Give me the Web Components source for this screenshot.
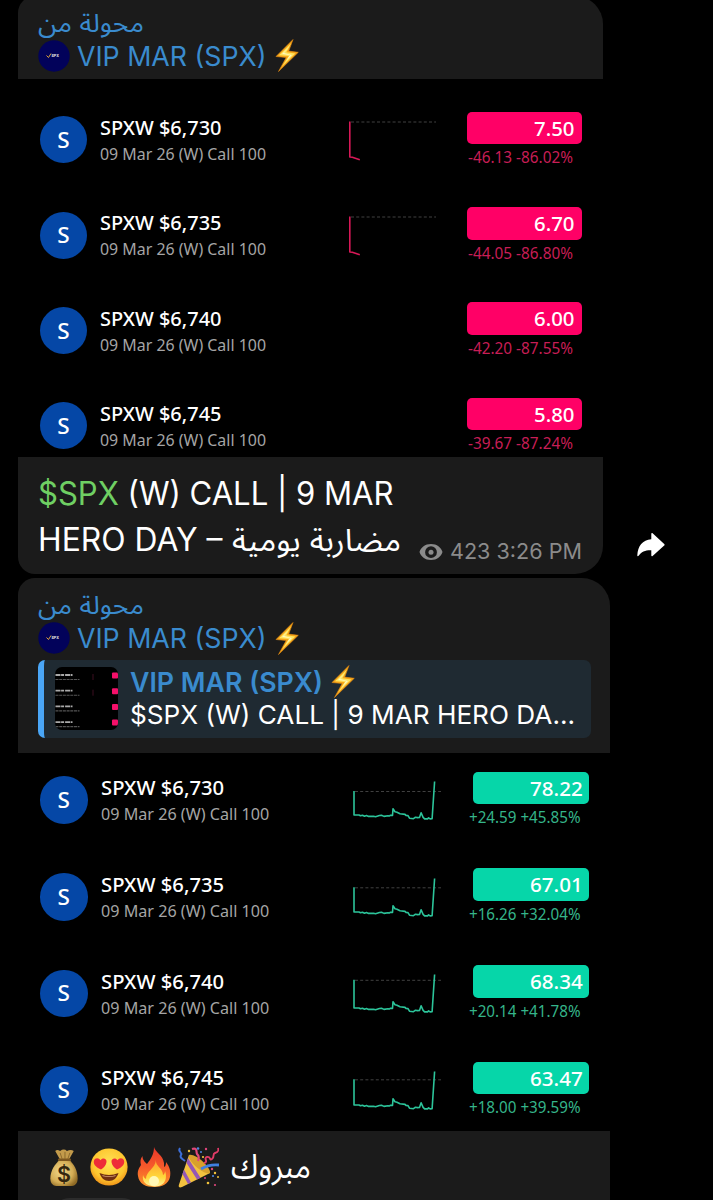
<!DOCTYPE html>
<html lang="ar">
<head>
<meta charset="utf-8">
<title>VIP MAR (SPX)</title>
<style>
  html, body {
    background: #000;
    height: 1200px;
    margin: 0;
    overflow: hidden;
  }
  body {
    color: #fff;
    font-family: Inter, "Noto Sans Arabic", "DejaVu Sans", sans-serif;
  }
  main {
    align-items: flex-start;
    display: flex;
    flex-direction: column;
    gap: 4px;
    padding-left: 18px;
  }
  .post {
    align-items: flex-end;
    display: flex;
    gap: 34.5px;
    margin-top: -4.5px;
  }
  .caption {
    display: block;
    height: 117px;
    box-sizing: border-box;
    padding: 14px 21px 0 20px;
    font-size: 32px;
    line-height: 46px;
  }
  .line {
    display: flex;
    height: 46px;
    white-space: nowrap;
  }
  .tag {
    color: #6fcf63;
  }
  .emojis {
    align-items: center;
    display: flex;
    height: 72px;
    padding-left: 29.5px;
    font-size: 33px;
  }
</style>
</head>
<body>
<main>
  <div class="post">
    <chat-bubble style="--w: 584.5px; --k: 1; --pad: 13.3px">
      <forward-header slot="head" style="height: 83.5px"></forward-header>
      <quote-row name="SPXW $6,730" price="7.50" change="-46.13 -86.02%" trend="down" ref="-18"></quote-row>
      <quote-row name="SPXW $6,735" price="6.70" change="-44.05 -86.80%" trend="down" ref="-18"></quote-row>
      <quote-row name="SPXW $6,740" price="6.00" change="-42.20 -87.55%"></quote-row>
      <quote-row name="SPXW $6,745" price="5.80" change="-39.67 -87.24%"></quote-row>
      <div slot="foot" class="caption">
        <div class="line"><fit-text width="355.5"><span class="tag">$SPX</span> (W) CALL | 9 MAR</fit-text></div>
        <div class="line">
          <fit-text width="184.5">HERO DAY –</fit-text>
          <fit-text width="169" style="margin-left: 9px; font-size: 31px">مضاربة يومية</fit-text>
          <post-meta></post-meta>
        </div>
      </div>
    </chat-bubble>
    <share-arrow></share-arrow>
  </div>

  <chat-bubble style="--w: 592px; --k: 1.0135; --pad: 0px; --lift: -1.2px">
    <forward-header slot="head" style="height: 82px"></forward-header>
    <reply-box slot="head"></reply-box>
    <quote-row name="SPXW $6,730" price="78.22" change="+24.59 +45.85%" trend="up" ref="-8.5"></quote-row>
    <quote-row name="SPXW $6,735" price="67.01" change="+16.26 +32.04%" trend="up" ref="-9.2"></quote-row>
    <quote-row name="SPXW $6,740" price="68.34" change="+20.14 +41.78%" trend="up" ref="-12.7"></quote-row>
    <quote-row name="SPXW $6,745" price="63.47" change="+18.00 +39.59%" trend="up" ref="-10.2"></quote-row>
    <div slot="foot" class="emojis">
      <emoji-icon name="bag" style="width: 32px; height: 39px"></emoji-icon>
      <emoji-icon name="love" style="width: 38px; height: 38px; margin-left: 10px"></emoji-icon>
      <emoji-icon name="fire" style="width: 34px; height: 40px; margin-left: 9px"></emoji-icon>
      <emoji-icon name="party" style="width: 42px; height: 41px; margin-left: 6px"></emoji-icon>
      <fit-text width="80" style="margin-left: 12px">مبروك</fit-text>
    </div>
    <reaction-pill slot="foot"></reaction-pill>
  </chat-bubble>
</main>

<script>
// Text squeezed or stretched to a given advance width
class FitText extends HTMLElement {
  constructor () {
    super()
    this.attachShadow({ mode: 'open' })
    this.shadowRoot.innerHTML = `
      <style>
        :host { display: inline-block; white-space: nowrap; flex: none; }
        span { display: inline-block; transform-origin: 0 50%; }
      </style>
      <span><slot></slot></span>`
  }

  connectedCallback () {
    const span = this.shadowRoot.querySelector('span')
    const width = parseFloat(this.getAttribute('width'))
    const natural = span.getBoundingClientRect().width
    this.style.width = width + 'px'
    span.style.transform = `scaleX(${width / natural})`
  }
}
customElements.define('fit-text', FitText)

const emojis = {
  bolt: `<svg viewBox="0 0 24 33">
    <path d="M18 .5 1 17.500l10.200 1L3.500 32.500 23.300 13.300l-9.600-1.200z" fill="#f7a81b" stroke="#e58a10" stroke-width=".6" stroke-linejoin="round"/>
    <path d="M16 4.500 4 16.200l9.800.9L7 27.500 20.300 14.400l-9-1.200z" fill="#ffe45c"/>
    <path d="M14 8 7 15l8 1-4 6 6-6-8-2z" fill="#fff8c4"/></svg>`,
  bag: `<svg viewBox="0 0 32 40">
    <defs><radialGradient id="b" cx=".4" cy=".45" r=".65"><stop offset="0" stop-color="#f3d98c"/><stop offset=".65" stop-color="#d4ad55"/><stop offset="1" stop-color="#8f6a25"/></radialGradient></defs>
    <path d="M7 3q2-2 5 0 4-3 7 0 4-2 7 0l-5 9H12z" fill="#c39b4b"/>
    <path d="M12 5l2 6m3-7v7m5-6-2 6" stroke="#8b692c" fill="none"/>
    <path d="M12 12h9c5 4 9 11 9 19 0 6-3 8-8 8H10c-5 0-8-2-8-8 0-8 5-15 10-19z" fill="url(#b)"/>
    <path d="M11 12h11" stroke="#7c571f" stroke-width="2.500" stroke-linecap="round"/>
    <text x="16" y="34.500" text-anchor="middle" font-family="Inter, sans-serif" font-weight="600" font-size="22" fill="#33260f">$</text></svg>`,
  love: `<svg viewBox="0 0 38 38">
    <defs><radialGradient id="l" cx=".5" cy=".4" r=".62"><stop offset="0" stop-color="#ffe457"/><stop offset=".7" stop-color="#fdc62f"/><stop offset="1" stop-color="#ee8e16"/></radialGradient></defs>
    <circle cx="19" cy="19" r="18.600" fill="url(#l)"/>
    <path d="M11 21.500C5 19 3 15.500 4 12.500c1-3 5-3 6.500-.2C12.500 9 17 10.500 16.500 14c-.4 3-2.500 5.500-5.500 7.500z" fill="#ee2d38"/>
    <path d="M27 21.500c6-2.500 8-6 7-9-1-3-5-3-6.500-.2C25.500 9 21 10.500 21.500 14c.4 3 2.500 5.500 5.500 7.500z" fill="#ee2d38"/>
    <path d="M9.500 25q9.500 4 19 0c-1.500 5-5 8-9.500 8s-8-3-9.500-8z" fill="#713012"/>
    <path d="M12 27q7 2.500 14 0l-1 1.200q-6 1.600-12 0z" fill="#d9a27a"/></svg>`,
  fire: `<svg viewBox="0 0 34 40">
    <defs><linearGradient id="f" x2="0" y2="1"><stop offset="0" stop-color="#e9362a"/><stop offset=".5" stop-color="#f65a2b"/><stop offset="1" stop-color="#fb9629"/></linearGradient>
    <linearGradient id="g" x2="0" y2="1"><stop offset="0" stop-color="#fda02c"/><stop offset=".65" stop-color="#ffd83b"/><stop offset="1" stop-color="#fff3a0"/></linearGradient></defs>
    <path d="M17 0c1 5 9 8 10 16 .2 2-.2 3 .5 4 1-1 1.500-2.500 1.500-5 4 5 5 10 4 15-1.500 7-8 10-16 10S2 37 1 29c-.8-5 1-8 3-11-.8-3-1-6 1.500-9C5.500 13 8 15 10 17 14 12 17 7 17 0z" fill="url(#f)"/>
    <path d="M19 13c-1 6 7 8 7 15 1-.5 2-2 2-4 2 5 2 15-10 15.500C8 39 5 34 6 28c.5 2 1.500 3 3 4 0-8 9-10 10-19z" fill="url(#g)"/>
    <ellipse cx="17" cy="34" rx="5" ry="5" fill="#fff8b5"/></svg>`,
  party: `<svg viewBox="0 0 42 41">
    <path d="M12 8 2 37.500c-1 2.500.5 3.500 3 2.500l28-14z" fill="#f3c13f"/>
    <path d="M9.500 16 20 32.500l3.500-1.700L11 11zM5.500 27 11 37l3-1.500L7 22.500z" fill="#9557b5"/>
    <path d="M12 8c6-2 22 12 21 18-5 3-23-12-21-18z" fill="#d8a02c"/>
    <path d="M3 1c-3 4 3 4 1 7s2 4 4 6" fill="none" stroke="#3d6fd8" stroke-width="2"/>
    <path d="M15 2c6-2 4 4 5 5s3 2 1 7" fill="none" stroke="#e14879" stroke-width="2.200"/>
    <path d="M27 16c5-1-1-5 3-6s2 4 5 2 0-5 3-6 4-2 3-5" fill="none" stroke="#e03b67" stroke-width="1.900"/>
    <path d="M24 22q8-5 18-4" fill="none" stroke="#3f7fe0" stroke-width="2.800"/>
    <g fill="#f2c33d"><circle cx="12" cy="4" r="1.200"/><circle cx="26" cy="10" r="1.100"/><circle cx="38" cy="26" r="1.200"/><circle cx="31" cy="36" r="1.300"/><circle cx="41" cy="30" r="1"/></g>
    <g fill="#4d86e0"><circle cx="21" cy="1.500" r="1.300"/><circle cx="24" cy="5" r="1"/><circle cx="36" cy="29" r="1.100"/></g>
    <g fill="#df467c"><circle cx="29" cy="2" r="1.200"/><circle cx="38" cy="38" r="1.100"/><circle cx="35" cy="22" r="1.200"/><circle cx="28" cy="31" r="1"/></g></svg>`
}

class EmojiIcon extends HTMLElement {
  constructor () {
    super()
    this.attachShadow({ mode: 'open' })
    this.shadowRoot.innerHTML = `
      <style>
        :host { display: block; flex: none; }
        svg { display: block; height: 100%; width: 100%; }
      </style>
      ${emojis[this.getAttribute('name')]}`
  }
}
customElements.define('emoji-icon', EmojiIcon)

class ChatBubble extends HTMLElement {
  constructor () {
    super()
    this.attachShadow({ mode: 'open' })
    this.shadowRoot.innerHTML = `
      <style>
        :host {
          background: #1b1b1b;
          border-radius: 17px 28px 28px 17px;
          display: block;
          flex: none;
          overflow: hidden;
          width: var(--w);
        }
        .media {
          background: #000;
          box-sizing: border-box;
          height: 378px;
          overflow: hidden;
          padding-top: var(--pad);
        }
        .rows { margin-top: var(--lift, 0px); }
      </style>
      <slot name="head"></slot>
      <div class="media"><div class="rows"><slot></slot></div></div>
      <slot name="foot"></slot>`
  }
}
customElements.define('chat-bubble', ChatBubble)

class ForwardHeader extends HTMLElement {
  constructor () {
    super()
    this.attachShadow({ mode: 'open' })
    this.shadowRoot.innerHTML = `
      <style>
        :host {
          box-sizing: border-box;
          color: #3a8bce;
          display: block;
          padding: 11px 20px 0 19.500px;
        }
        .from { font-size: 25px; height: 33px; line-height: 32px; }
        .who { align-items: center; display: flex; height: 32px; font-size: 26.500px; }
        svg { display: block; height: 32px; margin-right: 7.500px; width: 32px; }
        emoji-icon { height: 33px; margin-left: 8.500px; width: 24px; }
      </style>
      <div class="from"><fit-text width="106">محولة من</fit-text></div>
      <div class="who">
        <svg viewBox="0 0 32 32">
          <circle cx="16" cy="16" r="15.700" fill="#02025a"/>
          <path d="M8.500 15.500l2 2 2.500-4" stroke="#e0a53c" fill="none" stroke-width="1"/>
          <text x="13.500" y="17.200" font-size="3.600" font-weight="800" font-family="Inter, sans-serif" fill="#ddd">SPX</text>
        </svg>
        <fit-text width="189.5">VIP MAR (SPX)</fit-text>
        <emoji-icon name="bolt"></emoji-icon>
      </div>`
  }
}
customElements.define('forward-header', ForwardHeader)

class ReplyBox extends HTMLElement {
  constructor () {
    super()
    this.attachShadow({ mode: 'open' })
    const rows = [0, 1, 2, 3].map(i => `
      <g transform="translate(0 ${i * 15.7})">
        <path d="M.5 8h17" stroke="#aaa" stroke-width="1.800" stroke-dasharray="5 .6 3 1"/>
        <path d="M.5 12.500h24" stroke="#555" stroke-width="1.100" stroke-dasharray="3 .7"/>
        <rect x="57" y="5.500" width="6" height="6" rx="1" fill="#f5106a"/>
        ${i < 2 ? '<path d="M38 7v6" stroke="#57142e" stroke-width=".7"/>' : ''}
      </g>`).join('')
    this.shadowRoot.innerHTML = `
      <style>
        :host {
          align-items: center;
          background: #1f2a32;
          border-left: 6px solid #4aa6f6;
          border-radius: 7px;
          box-sizing: border-box;
          display: flex;
          height: 77.500px;
          margin: 0 19px 15.500px 19.500px;
        }
        svg { background: #000; border-radius: 7px; display: block; height: 63px; margin: 0 12px 0 11px; width: 63px; }
        .lines { padding-bottom: 1.500px; }
        .name { align-items: center; color: #3a8bce; display: flex; font-size: 26.500px; font-weight: 600; height: 33px; }
        .name emoji-icon { height: 33px; margin-left: 8.500px; width: 24px; }
        .text { font-size: 26px; height: 33px; line-height: 33px; }
      </style>
      <svg viewBox="0 0 63 63">${rows}</svg>
      <div class="lines">
        <div class="name"><fit-text width="193">VIP MAR (SPX)</fit-text><emoji-icon name="bolt"></emoji-icon></div>
        <div class="text"><fit-text width="445">$SPX (W) CALL | 9 MAR HERO DA...</fit-text></div>
      </div>`
  }
}
customElements.define('reply-box', ReplyBox)

class SparkLine extends HTMLElement {
  constructor () {
    super()
    this.attachShadow({ mode: 'open' })
  }

  // y = 24 is the middle of the row, ref is the previous close relative to it
  connectedCallback () {
    const trend = this.getAttribute('trend')
    const y = 24 + parseFloat(this.getAttribute('ref'))
    let lines = ''
    if (trend === 'down') {
      lines = `<path d="M6 ${y}h85" class="ref"/>
        <path d="M4.800 ${y - 0.5}v35.500l2.500.2 7.500 2.500" stroke="#d81857"/>`
    }
    if (trend === 'up') {
      lines = `<path d="M7 ${y}h86" class="ref"/>
        <path d="M6 ${y - 0.5}V39h5l1.500.8 2-.5 2 1 2-.7 2 .8 5-.2 2 .5 4-1.200 2-.3 2.500 1.200 4-.6 1.500.2 1-.8 2 .2.500-6.600 2 3 2 .4 3 1.600 5 .6 1 1 2 .2 1.500 2.600 4 .5 2-1.500 2 .4 2-.2 1.600-4.600 2 4.600 1.500 1.500h3l1-1 1.500 1 2-.2L86.600 5.500" stroke="#2cc49a"/>`
    }
    this.shadowRoot.innerHTML = `
      <style>
        :host { display: block; height: 48px; width: 95px; }
        svg { display: block; overflow: visible; }
        path { fill: none; stroke-linejoin: round; stroke-width: 1.600; }
        .ref { stroke: #404040; stroke-dasharray: 3 2.200; stroke-width: 1; }
      </style>
      <svg width="95" height="48" viewBox="0 0 95 48">${lines}</svg>`
  }
}
customElements.define('spark-line', SparkLine)

class QuoteRow extends HTMLElement {
  constructor () {
    super()
    this.attachShadow({ mode: 'open' })
  }

  connectedCallback () {
    const k = parseFloat(getComputedStyle(this).getPropertyValue('--k'))
    const price = this.getAttribute('price')
    const change = this.getAttribute('change')
    const up = change.startsWith('+')
    this.shadowRoot.innerHTML = `
      <style>
        :host {
          align-items: center;
          box-sizing: border-box;
          display: flex;
          font-family: "Noto Sans", "Open Sans", sans-serif;
          height: calc(95.33px * var(--k));
          padding: 0 21px 0 22px;
        }
        .logo {
          align-items: center;
          background: #0547a6;
          border-radius: 50%;
          display: flex;
          flex: none;
          font-size: 22.500px;
          font-weight: 500;
          height: calc(47px * var(--k));
          justify-content: center;
          line-height: 30px;
          margin-right: 13px;
          width: calc(47px * var(--k));
        }
        .info { flex: none; line-height: 26px; padding-top: 2.400px; width: calc(244.500px * var(--k)); }
        .info div { height: 26px; }
        .name { font-size: calc(19.600px * var(--k)); font-weight: 500; }
        .sub { color: #a5a5a5; font-size: calc(16px * var(--k)); }
        .quote { display: flex; flex-direction: column; margin-left: auto; width: calc(114.500px * var(--k)); }
        .price {
          background: ${up ? '#06d6a9' : '#ff0066'};
          border-radius: 5px;
          box-sizing: border-box;
          font-size: calc(20.300px * var(--k));
          font-weight: 500;
          height: 32.500px;
          line-height: 32px;
          padding-right: ${up ? 6.5 : 7}px;
          text-align: right;
        }
        .change {
          color: ${up ? '#35b58a' : '#c81e56'};
          display: flex;
          font-size: 15.800px;
          height: 24px;
          justify-content: flex-end;
          line-height: 26px;
          padding-right: 8.500px;
        }
      </style>
      <div class="logo">S</div>
      <div class="info">
        <div class="name"><fit-text width="${121.5 * k}">${this.getAttribute('name')}</fit-text></div>
        <div class="sub"><fit-text width="${166 * k}">09 Mar 26 (W) Call 100</fit-text></div>
      </div>
      <spark-line trend="${this.getAttribute('trend') || ''}" ref="${this.getAttribute('ref') || 0}"></spark-line>
      <div class="quote">
        <div class="price"><fit-text width="${(price.length > 4 ? 52 : 40.5) * k}">${price}</fit-text></div>
        <div class="change"><fit-text width="${up ? 111.5 : 105}">${change}</fit-text></div>
      </div>`
  }
}
customElements.define('quote-row', QuoteRow)

class PostMeta extends HTMLElement {
  constructor () {
    super()
    this.attachShadow({ mode: 'open' })
    this.shadowRoot.innerHTML = `
      <style>
        :host {
          align-items: center;
          align-self: flex-end;
          color: #8b8b8b;
          display: flex;
          flex: none;
          font-size: 21px;
          height: 22px;
          line-height: 22px;
          margin: 0 0 0 auto;
        }
        svg { display: block; margin-right: 7px; }
      </style>
      <svg width="24" height="18" viewBox="0 0 24 18">
        <path d="M12 1C6 1 2 4.500.5 9c1.500 4.500 5.500 8 11.500 8s10-3.500 11.500-8C22 4.500 18 1 12 1zM12 3.300a5.900 5.900 0 1 1 0 11.800 5.900 5.900 0 0 1 0-11.800z" fill="currentColor" fill-rule="evenodd"/>
        <circle cx="12" cy="9.200" r="2.500" fill="currentColor"/>
      </svg>
      <fit-text width="132">423 3:26 PM</fit-text>`
  }
}
customElements.define('post-meta', PostMeta)

class ShareArrow extends HTMLElement {
  constructor () {
    super()
    this.attachShadow({ mode: 'open' })
    this.shadowRoot.innerHTML = `
      <style>
        :host { display: block; padding-bottom: 17px; }
        svg { display: block; }
      </style>
      <svg width="28" height="24" viewBox="0 0 28 24">
        <path d="M14.300.8c0-.8.7-1 1.300-.5l11.600 10.600c.6.6.6 1.100 0 1.700L15.600 23.100c-.6.5-1.300.3-1.300-.5v-5.400C8.500 17 4.500 18.500 1.600 22.800c-.5.8-1.400.5-1.300-.5C.8 13 5.500 6.800 14.300 6.200z" fill="#fff"/>
      </svg>`
  }
}
customElements.define('share-arrow', ShareArrow)

// Top edge of the reactions under the last message
class ReactionPill extends HTMLElement {
  constructor () {
    super()
    this.attachShadow({ mode: 'open' })
    this.shadowRoot.innerHTML = `
      <style>
        :host { background: #2c2c2c; border-radius: 18px; display: block; height: 36px; margin: -5px 0 10px 34px; width: 88px; }
      </style>`
  }
}
customElements.define('reaction-pill', ReactionPill)
</script>
</body>
</html>
